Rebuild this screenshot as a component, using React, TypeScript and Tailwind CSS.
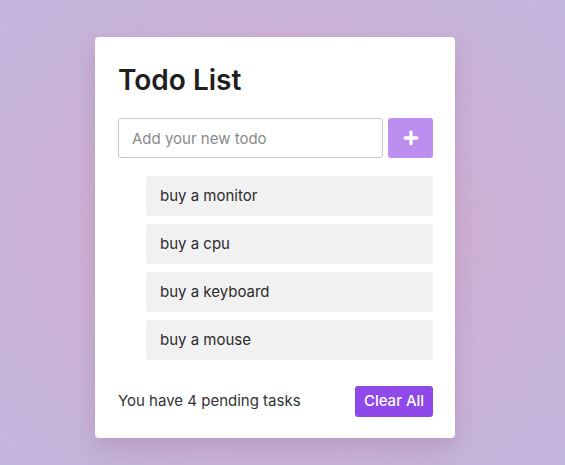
import { Plus } from 'lucide-react';

const todos = ['buy a monitor', 'buy a cpu', 'buy a keyboard', 'buy a mouse'];

const App = () => {
    return (
        <div className="min-h-screen w-full flex justify-center pt-[37px] pr-[15px] bg-[radial-gradient(ellipse_at_center,#d8adce_0%,#cfb1d5_45%,#c2b6dd_100%)] font-['Inter',sans-serif]">
            <div className="w-[360px] h-[401px] bg-white rounded-[4px] shadow-[0_10px_25px_rgba(90,40,90,0.18)] pl-[23px] pr-[22px] pt-[25px]">
                <h1 className="text-[28px] font-semibold text-[#1f1f1f] leading-[36px]">Todo List</h1>

                <div className="flex gap-[5px] mt-[20px]">
                    <input
                        placeholder="Add your new todo"
                        className="w-[265px] h-[40px] border border-[#c9c9c9] rounded-[3px] px-[13px] text-[15px] text-[#333] placeholder:text-[#8a8a8a] outline-none"
                    />
                    <button className="w-[45px] h-[40px] bg-[#bb8ef0] rounded-[3px] flex items-center justify-center text-white">
                        <Plus className="w-[20px] h-[20px]" strokeWidth={4} />
                    </button>
                </div>

                <ul className="ml-[28px] mt-[18px] flex flex-col gap-[8px]">
                    {todos.map((t, i) => (
                        <li key={i} className="h-[40px] bg-[#f1f1f1] rounded-[3px] flex items-center px-[14px] text-[15px] text-[#2b2b2b]">
                            {t}
                        </li>
                    ))}
                </ul>

                <div className="flex items-center justify-between mt-[26px]">
                    <span className="text-[15px] text-[#333]">You have 4 pending tasks</span>
                    <button className="w-[78px] h-[31px] bg-[#8e49e8] rounded-[3px] text-white text-[15px] font-medium">Clear All</button>
                </div>
            </div>
        </div>
    );
};

export default App;
